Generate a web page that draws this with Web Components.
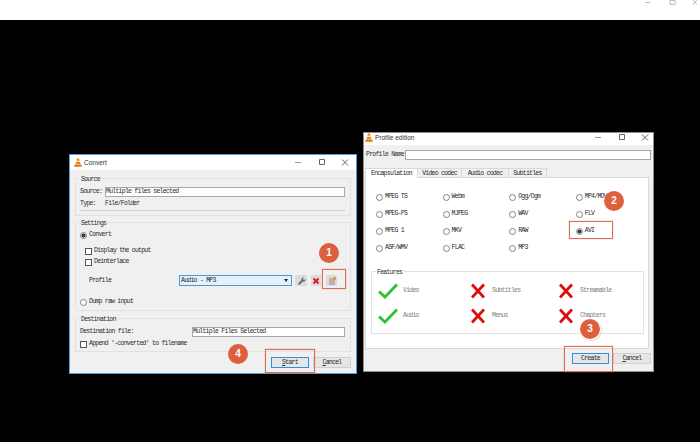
<!DOCTYPE html>
<html>
<head>
<meta charset="utf-8">
<title>VLC convert</title>
<style>
    html, body { margin: 0; background: #000; }
</style>
</head>
<body>
<desk-top>
    <vlc-window slot="windows" heading="Convert" class="convert" style="left:69px;top:154px;width:286px;height:218px;--ctl-pad:3px;--bar:15px;--bar-pb:0px;--cone-left:4px;--edge:#5b9bd5">
        <div style="padding:8px 5px 0">
            <group-box label="Source" style="--top:8px;--bottom:4px">
                <form-row style="padding-left:4px;padding-right:5px">
                    <span style="width:25px">Source:</span>
                    <text-field style="flex:1">Multiple files selected</text-field>
                </form-row>
                <form-row style="padding-left:4px;margin-top:2px">
                    <span style="width:25px">Type:</span>
                    <span>File/Folder</span>
                </form-row>
                <h-rule style="margin:1px 5px 0 4px"></h-rule>
            </group-box>
            <group-box label="Settings" style="margin-top:6px;--top:7px;--bottom:3px">
                <radio-opt checked style="margin-left:4px">Convert</radio-opt>
                <check-opt style="margin:6px 0 0 9px">Display the output</check-opt>
                <check-opt style="margin:1px 0 0 9px">Deinterlace</check-opt>
                <form-row style="margin-top:8px;padding-left:13px;height:11px">
                    <span style="width:90px">Profile</span>
                    <drop-down style="width:113px">Audio - MP3</drop-down>
                    <tool-btn icon="wrench" style="margin-left:3px;width:12px"></tool-btn>
                    <tool-btn icon="cross" style="margin-left:4px;width:10px"></tool-btn>
                    <tool-btn icon="file" style="margin-left:5px;width:11px"></tool-btn>
                </form-row>
                <radio-opt style="margin:11px 0 0 4px">Dump raw input</radio-opt>
            </group-box>
            <group-box label="Destination" style="margin-top:7px;--top:8px;--bottom:2px">
                <form-row style="padding-left:4px;padding-right:5px">
                    <span style="width:112px">Destination file:</span>
                    <text-field style="flex:1">Multiple Files Selected</text-field>
                </form-row>
                <check-opt style="margin:2px 0 0 4px">Append '-converted' to filename</check-opt>
            </group-box>
            <button-bar style="margin-top:5px">
                <push-btn default style="width:38px"><u>S</u>tart</push-btn>
                <push-btn style="width:38px;margin-left:4px"><u>C</u>ancel</push-btn>
            </button-bar>
        </div>
    </vlc-window>

    <vlc-window slot="windows" heading="Profile edition" class="profile" style="left:363px;top:132px;width:289px;height:238px;--ctl-pad:0px;--bar:12px;--bar-pb:4px;--cone-left:1px;--edge:#8f8f8f">
        <div style="padding:5px 2px 0 1px">
            <form-row style="height:10px;padding-left:1px">
                <span style="width:39px">Profile Name</span>
                <text-field style="flex:1"></text-field>
            </form-row>
            <tab-strip style="margin-top:8px;margin-right:2px">
                <tab-item active style="width:53px">Encapsulation</tab-item>
                <tab-item style="width:44px">Video codec</tab-item>
                <tab-item style="width:47px">Audio codec</tab-item>
                <tab-item style="width:38px">Subtitles</tab-item>
            </tab-strip>
            <div style="background:#fff;border:1px solid #d9d9d9;margin-right:2px;height:172px;box-sizing:border-box;padding:14px 4px 0 5px">
                <radio-grid>
                    <radio-opt>MPEG TS</radio-opt>
                    <radio-opt>Webm</radio-opt>
                    <radio-opt>Ogg/Ogm</radio-opt>
                    <radio-opt>MP4/MOV</radio-opt>
                    <radio-opt>MPEG-PS</radio-opt>
                    <radio-opt>MJPEG</radio-opt>
                    <radio-opt>WAV</radio-opt>
                    <radio-opt>FLV</radio-opt>
                    <radio-opt>MPEG 1</radio-opt>
                    <radio-opt>MKV</radio-opt>
                    <radio-opt>RAW</radio-opt>
                    <radio-opt checked>AVI</radio-opt>
                    <radio-opt>ASF/WMV</radio-opt>
                    <radio-opt>FLAC</radio-opt>
                    <radio-opt>MP3</radio-opt>
                </radio-grid>
                <group-box label="Features" tint="#fff" style="margin-top:18px;--top:11px;--bottom:9px">
                    <feature-grid>
                        <feature-item kind="yes">Video</feature-item>
                        <feature-item kind="no">Subtitles</feature-item>
                        <feature-item kind="no">Streamable</feature-item>
                        <feature-item kind="yes">Audio</feature-item>
                        <feature-item kind="no">Menus</feature-item>
                        <feature-item kind="no">Chapters</feature-item>
                    </feature-grid>
                </group-box>
            </div>
            <button-bar style="margin-top:4px">
                <push-btn default style="width:37px">Create</push-btn>
                <push-btn style="width:38px;margin-left:4px"><u>C</u>ancel</push-btn>
            </button-bar>
        </div>
    </vlc-window>

    <note-box slot="notes" style="left:322px;top:269px;width:24px;height:20px"></note-box>
    <note-box slot="notes" style="left:265px;top:349px;width:50px;height:24px"></note-box>
    <note-box slot="notes" style="left:569px;top:221px;width:44px;height:18px"></note-box>
    <note-box slot="notes" style="left:564px;top:346px;width:49px;height:26px"></note-box>
    <step-badge slot="notes" style="left:319px;top:243px">1</step-badge>
    <step-badge slot="notes" style="left:604px;top:191px">2</step-badge>
    <step-badge slot="notes" ring style="left:580px;top:319px">3</step-badge>
    <step-badge slot="notes" style="left:228px;top:344px">4</step-badge>
</desk-top>

<script>
const ICONS = {
    wrench: '<path d="M7.500 1.500a2 2 0 0 0-2 2.600L2 7.600 3.400 9l3.500-3.500a2 2 0 0 0 2.500-2.600L8 4.200 6.800 3 8.100 1.700z" fill="#6a6a6a"/>',
    cross: '<path d="M2.500 2.500l5 5M7.500 2.500l-5 5" stroke="#d81818" stroke-width="1.800" fill="none"/>',
    file: '<rect x="2" y="2" width="6" height="7" fill="#b4b4b4"/><rect x="6" y="1" width="3" height="3" fill="#f59a1f"/>'
};

class DeskTop extends HTMLElement {
    constructor() {
        super();
        this.attachShadow({ mode: 'open' });
        this.shadowRoot.innerHTML = `
        <style>
            :host {
                display: block;
                position: relative;
                width: 700px;
                height: 442px;
                overflow: hidden;
                background: #000;
                color: #2b2b2b;
                font: 6.5px/10px "Liberation Mono", monospace;
                letter-spacing: -0.75px;
            }
            .top {
                height: 20px;
                background: #fff;
                display: flex;
                justify-content: flex-end;
            }
            svg { display: block; }
        </style>
        <div class="top">
            <svg width="60" height="20" viewBox="0 0 60 20">
                <path d="M5 2.500h5" stroke="#bbb" fill="none"/>
                <path d="M30 0.500h5v4h-5z" stroke="#bbb" fill="none"/>
                <path d="M53 0l4 4.500M57 0l-4 4.500" stroke="#bbb" fill="none"/>
            </svg>
        </div>
        <slot name="windows"></slot>
        <slot name="notes"></slot>`;
    }
}

// window frame with the title bar, body goes in the slot
class VlcWindow extends HTMLElement {
    constructor() {
        super();
        this.attachShadow({ mode: 'open' });
    }

    connectedCallback() {
        this.shadowRoot.innerHTML = `
        <style>
            :host {
                display: block;
                position: absolute;
                background: #f0f0f0;
                border: 1px solid var(--edge);
            }
            .bar {
                box-sizing: border-box;
                height: var(--bar);
                background: #fff;
                display: flex;
                align-items: center;
                padding-right: var(--ctl-pad);
                padding-bottom: var(--bar-pb);
            }
            .name {
                flex: 1;
                font: 6.5px "Liberation Sans", sans-serif;
                letter-spacing: 0;
                color: #333;
            }
            svg { display: block; }
            .cone { margin: 0 2px 0 var(--cone-left); }
            .ctl { margin-left: 7.5px; }
        </style>
        <div class="bar">
            <svg class="cone" width="8" height="9" viewBox="0 0 8 9">
                <path d="M3 .5h2l.6 2.200H2.400zM2.100 3.700h3.800l.6 2.300H1.500z" fill="#f08a12"/>
                <path d="M0 8.800L1 6.500h6l1 2.300z" fill="#e8700c"/>
            </svg>
            <span class="name">${this.getAttribute('heading')}</span>
            <svg class="ctl" width="16" height="9" viewBox="0 0 16 9"><path d="M5 4.500h6" stroke="#999" fill="none"/></svg>
            <svg class="ctl" width="16" height="9" viewBox="0 0 16 9"><path d="M5.500 1.500h5v5h-5z" stroke="#666" fill="none"/></svg>
            <svg class="ctl" width="16" height="9" viewBox="0 0 16 9"><path d="M5 1.500l6 6M11 1.500l-6 6" stroke="#666" fill="none"/></svg>
        </div>
        <slot></slot>`;
    }
}

class GroupBox extends HTMLElement {
    constructor() {
        super();
        this.attachShadow({ mode: 'open' });
    }

    connectedCallback() {
        const tint = this.getAttribute('tint') || '#f0f0f0';
        this.shadowRoot.innerHTML = `
        <style>
            :host {
                display: block;
                position: relative;
                border: 1px solid #e2e2e2;
                padding-top: var(--top);
                padding-bottom: var(--bottom);
            }
            .label {
                position: absolute;
                left: 4px;
                top: -4px;
                padding: 0 1px;
                background: ${tint};
            }
        </style>
        <span class="label">${this.getAttribute('label')}</span>
        <slot></slot>`;
    }
}

class FormRow extends HTMLElement {
    constructor() {
        super();
        this.attachShadow({ mode: 'open' });
        this.shadowRoot.innerHTML = `
        <style>
            :host { display: flex; align-items: center; min-height: 10px; }
            ::slotted(span) { white-space: nowrap; flex: none; }
        </style>
        <slot></slot>`;
    }
}

class HRule extends HTMLElement {
    constructor() {
        super();
        this.attachShadow({ mode: 'open' });
        this.shadowRoot.innerHTML = `<style>:host { display: block; height: 1px; background: #d6d6d6; }</style>`;
    }
}

class TextField extends HTMLElement {
    constructor() {
        super();
        this.attachShadow({ mode: 'open' });
        this.shadowRoot.innerHTML = `
        <style>
            :host {
                display: block;
                box-sizing: border-box;
                height: 10px;
                background: #fff;
                border: 1px solid #a8a8a8;
                line-height: 8px;
                white-space: nowrap;
                overflow: hidden;
            }
        </style>
        <slot></slot>`;
    }
}

class DropDown extends HTMLElement {
    constructor() {
        super();
        this.attachShadow({ mode: 'open' });
        this.shadowRoot.innerHTML = `
        <style>
            :host {
                display: flex;
                align-items: center;
                justify-content: space-between;
                box-sizing: border-box;
                height: 11px;
                background: #e5f1fb;
                border: 1px solid #4a9ad8;
                padding: 0 3px 0 1px;
            }
            .arrow {
                width: 0;
                border: 2.500px solid transparent;
                border-top: 3px solid #222;
                border-bottom: 0;
            }
        </style>
        <slot></slot><span class="arrow"></span>`;
    }
}

class ToolBtn extends HTMLElement {
    constructor() {
        super();
        this.attachShadow({ mode: 'open' });
    }

    connectedCallback() {
        this.shadowRoot.innerHTML = `
        <style>
            :host {
                display: flex;
                align-items: center;
                justify-content: center;
                height: 11px;
                background: #dcdcdc;
            }
        </style>
        <svg width="10" height="10" viewBox="0 0 10 10">${ICONS[this.getAttribute('icon')]}</svg>`;
    }
}

class RadioOpt extends HTMLElement {
    constructor() {
        super();
        this.attachShadow({ mode: 'open' });
    }

    connectedCallback() {
        const dot = this.hasAttribute('checked') ? '<circle cx="3.500" cy="3.500" r="2" fill="#333"/>' : '';
        this.shadowRoot.innerHTML = `
        <style>
            :host { display: flex; align-items: center; height: 10px; gap: 2px; white-space: nowrap; }
            svg { flex: none; }
        </style>
        <svg width="7" height="7" viewBox="0 0 7 7"><circle cx="3.500" cy="3.500" r="3" fill="#fff" stroke="#666" stroke-width=".8"/>${dot}</svg>
        <span><slot></slot></span>`;
    }
}

class CheckOpt extends HTMLElement {
    constructor() {
        super();
        this.attachShadow({ mode: 'open' });
        this.shadowRoot.innerHTML = `
        <style>
            :host { display: flex; align-items: center; height: 10px; gap: 2px; white-space: nowrap; }
            i { flex: none; box-sizing: border-box; width: 7px; height: 7px; border: 1px solid #555; background: #fff; }
        </style>
        <i></i><span><slot></slot></span>`;
    }
}

class ButtonBar extends HTMLElement {
    constructor() {
        super();
        this.attachShadow({ mode: 'open' });
        this.shadowRoot.innerHTML = `
        <style>:host { display: flex; justify-content: flex-end; }</style>
        <slot></slot>`;
    }
}

class PushBtn extends HTMLElement {
    constructor() {
        super();
        this.attachShadow({ mode: 'open' });
    }

    connectedCallback() {
        const edge = this.hasAttribute('default') ? '#2f8fe0' : '#d0d0d0';
        this.shadowRoot.innerHTML = `
        <style>
            :host {
                display: block;
                box-sizing: border-box;
                height: 11px;
                line-height: 9px;
                text-align: center;
                background: #e6e6e6;
                border: 1px solid ${edge};
            }
        </style>
        <slot></slot>`;
    }
}

class TabStrip extends HTMLElement {
    constructor() {
        super();
        this.attachShadow({ mode: 'open' });
        this.shadowRoot.innerHTML = `
        <style>:host { display: flex; height: 10px; margin-bottom: -1px; position: relative; }</style>
        <slot></slot>`;
    }
}

class TabItem extends HTMLElement {
    constructor() {
        super();
        this.attachShadow({ mode: 'open' });
    }

    connectedCallback() {
        const active = this.hasAttribute('active');
        this.shadowRoot.innerHTML = `
        <style>
            :host {
                display: block;
                box-sizing: border-box;
                line-height: 9px;
                text-align: center;
                white-space: nowrap;
                background: ${active ? '#fff' : '#f0f0f0'};
                border: 1px solid #d9d9d9;
                border-left-width: ${active ? 1 : 0}px;
                border-bottom-color: ${active ? '#fff' : '#d9d9d9'};
            }
        </style>
        <slot></slot>`;
    }
}

class RadioGrid extends HTMLElement {
    constructor() {
        super();
        this.attachShadow({ mode: 'open' });
        this.shadowRoot.innerHTML = `
        <style>
            :host {
                display: grid;
                grid-template-columns: repeat(4, 66.6px);
                row-gap: 7px;
                padding-left: 5px;
            }
        </style>
        <slot></slot>`;
    }
}

class FeatureGrid extends HTMLElement {
    constructor() {
        super();
        this.attachShadow({ mode: 'open' });
        this.shadowRoot.innerHTML = `
        <style>
            :host {
                display: grid;
                grid-template-columns: 93px 88px 1fr;
                row-gap: 9px;
                padding-left: 6px;
            }
        </style>
        <slot></slot>`;
    }
}

class FeatureItem extends HTMLElement {
    constructor() {
        super();
        this.attachShadow({ mode: 'open' });
    }

    connectedCallback() {
        const yes = this.getAttribute('kind') === 'yes';
        const mark = yes
            ? '<svg width="20" height="16" viewBox="0 0 20 16"><path d="M1 8.500l6 5.500L19 1.500" stroke="#2fc22f" stroke-width="2.800" fill="none"/></svg>'
            : '<svg width="14" height="16" viewBox="0 0 14 16"><path d="M1 1.500l12 13M13 1.500l-12 13" stroke="#dc0d0d" stroke-width="2.800" fill="none"/></svg>';
        this.shadowRoot.innerHTML = `
        <style>
            :host { display: flex; align-items: center; height: 16px; gap: ${yes ? 5 : 7}px; color: #808080; white-space: nowrap; }
            svg { flex: none; display: block; }
        </style>
        ${mark}<span><slot></slot></span>`;
    }
}

class NoteBox extends HTMLElement {
    constructor() {
        super();
        this.attachShadow({ mode: 'open' });
        this.shadowRoot.innerHTML = `
        <style>
            :host {
                display: block;
                position: absolute;
                box-sizing: border-box;
                border: 1px solid #da6f55;
                box-shadow: 0 0 1px #e08a74;
            }
        </style>`;
    }
}

class StepBadge extends HTMLElement {
    constructor() {
        super();
        this.attachShadow({ mode: 'open' });
    }

    connectedCallback() {
        this.shadowRoot.innerHTML = `
        <style>
            :host {
                display: block;
                position: absolute;
                width: 20px;
                height: 20px;
                border-radius: 50%;
                background: #dc5f3e;
                color: #fff;
                font: bold 10px/20px "Liberation Sans", sans-serif;
                letter-spacing: 0;
                text-align: center;
                ${this.hasAttribute('ring') ? 'box-shadow: 0 0 0 1px #fff, 1px 1px 0 1px #ddd;' : ''}
            }
        </style>
        <slot></slot>`;
    }
}

customElements.define('desk-top', DeskTop);
customElements.define('vlc-window', VlcWindow);
customElements.define('group-box', GroupBox);
customElements.define('form-row', FormRow);
customElements.define('h-rule', HRule);
customElements.define('text-field', TextField);
customElements.define('drop-down', DropDown);
customElements.define('tool-btn', ToolBtn);
customElements.define('radio-opt', RadioOpt);
customElements.define('check-opt', CheckOpt);
customElements.define('button-bar', ButtonBar);
customElements.define('push-btn', PushBtn);
customElements.define('tab-strip', TabStrip);
customElements.define('tab-item', TabItem);
customElements.define('radio-grid', RadioGrid);
customElements.define('feature-grid', FeatureGrid);
customElements.define('feature-item', FeatureItem);
customElements.define('note-box', NoteBox);
customElements.define('step-badge', StepBadge);
</script>
</body>
</html>
